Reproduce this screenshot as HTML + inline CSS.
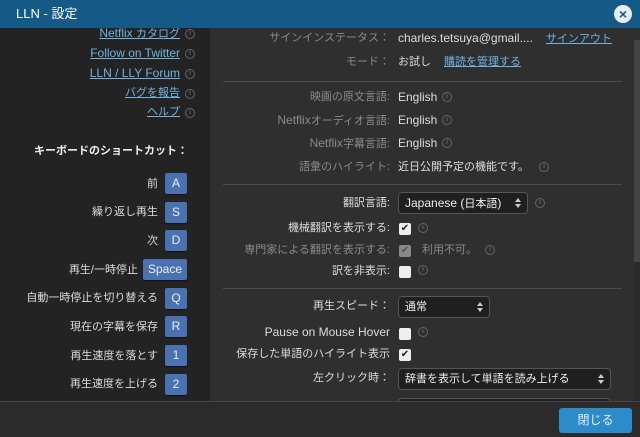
<!DOCTYPE html>
<html><head><meta charset="utf-8"><style>
*{margin:0;padding:0;box-sizing:border-box}
body{width:640px;height:437px;overflow:hidden;background:#2f2f2f;font-family:"Liberation Sans","Noto Sans CJK JP",sans-serif;font-size:12px;color:#ddd;position:relative}
.a{position:absolute;white-space:nowrap;line-height:16px}
.j{font-size:11px}
#hdr{position:absolute;left:0;top:0;width:640px;height:28px;background:#155a86;color:#fff;font-size:13px;line-height:28px;padding-left:16px}
#close{position:absolute;left:614px;top:5px;width:18px;height:18px;border-radius:50%;background:#e8eef3;color:#155a86;font-weight:bold;font-size:14px;line-height:18px;text-align:center}
#left{position:absolute;left:0;top:28px;width:210px;height:373px;background:#232323}
.lk{color:#6fb3e0;text-decoration:underline;text-align:right;width:180px;left:0}
.info{position:absolute;width:10px;height:10px;border:1px solid #666;border-radius:50%;font-size:7px;line-height:8px;text-align:center;color:#777}
.kl{text-align:right;width:158px;left:0;color:#ddd;font-size:11px}
.key{position:absolute;height:21px;background:#4a72b0;color:#e8eef8;border-radius:2px;text-align:center;line-height:21px;font-size:12px;box-shadow:0 1px 1px #111}
.lb{text-align:right;width:390px;left:0}
.g{color:#8a8a8a}
.v{left:398px}
.sep{position:absolute;left:223px;width:399px;height:1px;background:#4a4a4a}
.sel{position:absolute;height:22px;background:#1f1f1f;border:1px solid #555;border-radius:4px;color:#eee;line-height:20px;padding-left:6px}
.sel:after{content:"";position:absolute;right:6px;top:5px;border-left:3px solid transparent;border-right:3px solid transparent;border-bottom:4px solid #ccc}
.sel:before{content:"";position:absolute;right:6px;top:11px;border-left:3px solid transparent;border-right:3px solid transparent;border-top:4px solid #ccc}
.cb{position:absolute;width:12px;height:12px;background:#eee;border-radius:2px;color:#222;font-size:10px;line-height:12px;text-align:center}
#foot{position:absolute;left:0;top:401px;width:640px;height:36px;background:#2b2b2b;border-top:1px solid #444}
#btn{position:absolute;left:559px;top:6px;width:73px;height:25px;background:#2e8bc9;border-radius:3px;color:#e6f1f8;text-align:center;line-height:25px;font-size:12px}
</style></head><body>
<div id="hdr">LLN - 設定</div><div id="close">×</div>
<div id="left"></div>
<div class="a lk" style="top:25px">Netflix <span class="j">カタログ</span></div><div class="info" style="left:185px;top:29px">i</div>
<div class="a lk" style="top:45px">Follow on Twitter</div><div class="info" style="left:185px;top:49px">i</div>
<div class="a lk" style="top:65px">LLN / LLY Forum</div><div class="info" style="left:185px;top:69px">i</div>
<div class="a lk j" style="top:85px">バグを報告</div><div class="info" style="left:185px;top:89px">i</div>
<div class="a lk j" style="top:104px">ヘルプ</div><div class="info" style="left:185px;top:108px">i</div>
<div class="a j" style="top:143px;left:0;width:188px;text-align:right;font-weight:bold;color:#eee">キーボードのショートカット：</div>
<div class="a kl" style="top:176px">前</div><div class="key" style="left:165px;top:173px;width:22px">A</div>
<div class="a kl" style="top:204px">繰り返し再生</div><div class="key" style="left:165px;top:202px;width:22px">S</div>
<div class="a kl" style="top:233px">次</div><div class="key" style="left:165px;top:230px;width:22px">D</div>
<div class="a j" style="top:262px;left:0;width:138px;text-align:right">再生/一時停止</div><div class="key" style="left:143px;top:259px;width:44px">Space</div>
<div class="a kl" style="top:290px">自動一時停止を切り替える</div><div class="key" style="left:165px;top:288px;width:22px">Q</div>
<div class="a kl" style="top:319px">現在の字幕を保存</div><div class="key" style="left:165px;top:316px;width:22px">R</div>
<div class="a kl" style="top:348px">再生速度を落とす</div><div class="key" style="left:165px;top:345px;width:22px">1</div>
<div class="a kl" style="top:376px">再生速度を上げる</div><div class="key" style="left:165px;top:374px;width:22px">2</div>

<div class="a lb g j" style="top:30px">サインインステータス：</div><div class="a v" style="top:30px">charles.tetsuya@gmail....<span class="j" style="color:#6fb3e0;text-decoration:underline;margin-left:13px">サインアウト</span></div>
<div class="a lb g j" style="top:54px">モード：</div><div class="a v j" style="top:54px">お試し<span style="color:#6fb3e0;text-decoration:underline;margin-left:13px">購読を管理する</span></div>
<div class="sep" style="top:81px"></div>
<div class="a lb g j" style="top:89px">映画の原文言語:</div><div class="a v" style="top:89px">English</div><div class="info" style="left:442px;top:92px">i</div>
<div class="a lb g" style="top:112px">Netflix<span class="j">オーディオ言語:</span></div><div class="a v" style="top:112px">English</div><div class="info" style="left:442px;top:115px">i</div>
<div class="a lb g" style="top:135px">Netflix<span class="j">字幕言語:</span></div><div class="a v" style="top:135px">English</div><div class="info" style="left:442px;top:138px">i</div>
<div class="a lb g j" style="top:159px">語彙のハイライト:</div><div class="a v j" style="top:159px">近日公開予定の機能です。</div><div class="info" style="left:539px;top:162px">i</div>
<div class="sep" style="top:184px"></div>
<div class="a lb j" style="top:195px">翻訳言語:</div><div class="sel" style="left:398px;top:192px;width:130px">Japanese (<span class="j">日本語</span>)</div><div class="info" style="left:535px;top:198px">i</div>
<div class="a lb j" style="top:220px">機械翻訳を表示する:</div><div class="cb" style="left:399px;top:223px">✔</div><div class="info" style="left:418px;top:223px">i</div>
<div class="a lb g j" style="top:242px">専門家による翻訳を表示する:</div><div class="cb" style="left:399px;top:245px;background:#888;color:#555">✔</div><div class="a g j" style="left:422px;top:242px">利用不可。</div><div class="info" style="left:485px;top:245px">i</div>
<div class="a lb j" style="top:263px">訳を非表示:</div><div class="cb" style="left:399px;top:266px"></div><div class="info" style="left:418px;top:265px">i</div>
<div class="sep" style="top:288px"></div>
<div class="a lb j" style="top:298px">再生スピード：</div><div class="sel j" style="left:398px;top:296px;width:92px">通常</div>
<div class="a lb" style="top:324px">Pause on Mouse Hover</div><div class="cb" style="left:399px;top:328px"></div><div class="info" style="left:418px;top:327px">i</div>
<div class="a lb j" style="top:346px">保存した単語のハイライト表示</div><div class="cb" style="left:399px;top:349px">✔</div>
<div class="a lb j" style="top:370px">左クリック時：</div><div class="sel j" style="left:398px;top:368px;width:213px">辞書を表示して単語を読み上げる</div>
<div class="sel" style="left:398px;top:398px;width:213px"></div>
<div style="position:absolute;left:634px;top:40px;width:6px;height:361px;background:#2a2a2a"></div>
<div style="position:absolute;left:634px;top:40px;width:6px;height:222px;background:#444"></div>
<div id="foot"><div id="btn" class="j">閉じる</div></div>
</body></html>
